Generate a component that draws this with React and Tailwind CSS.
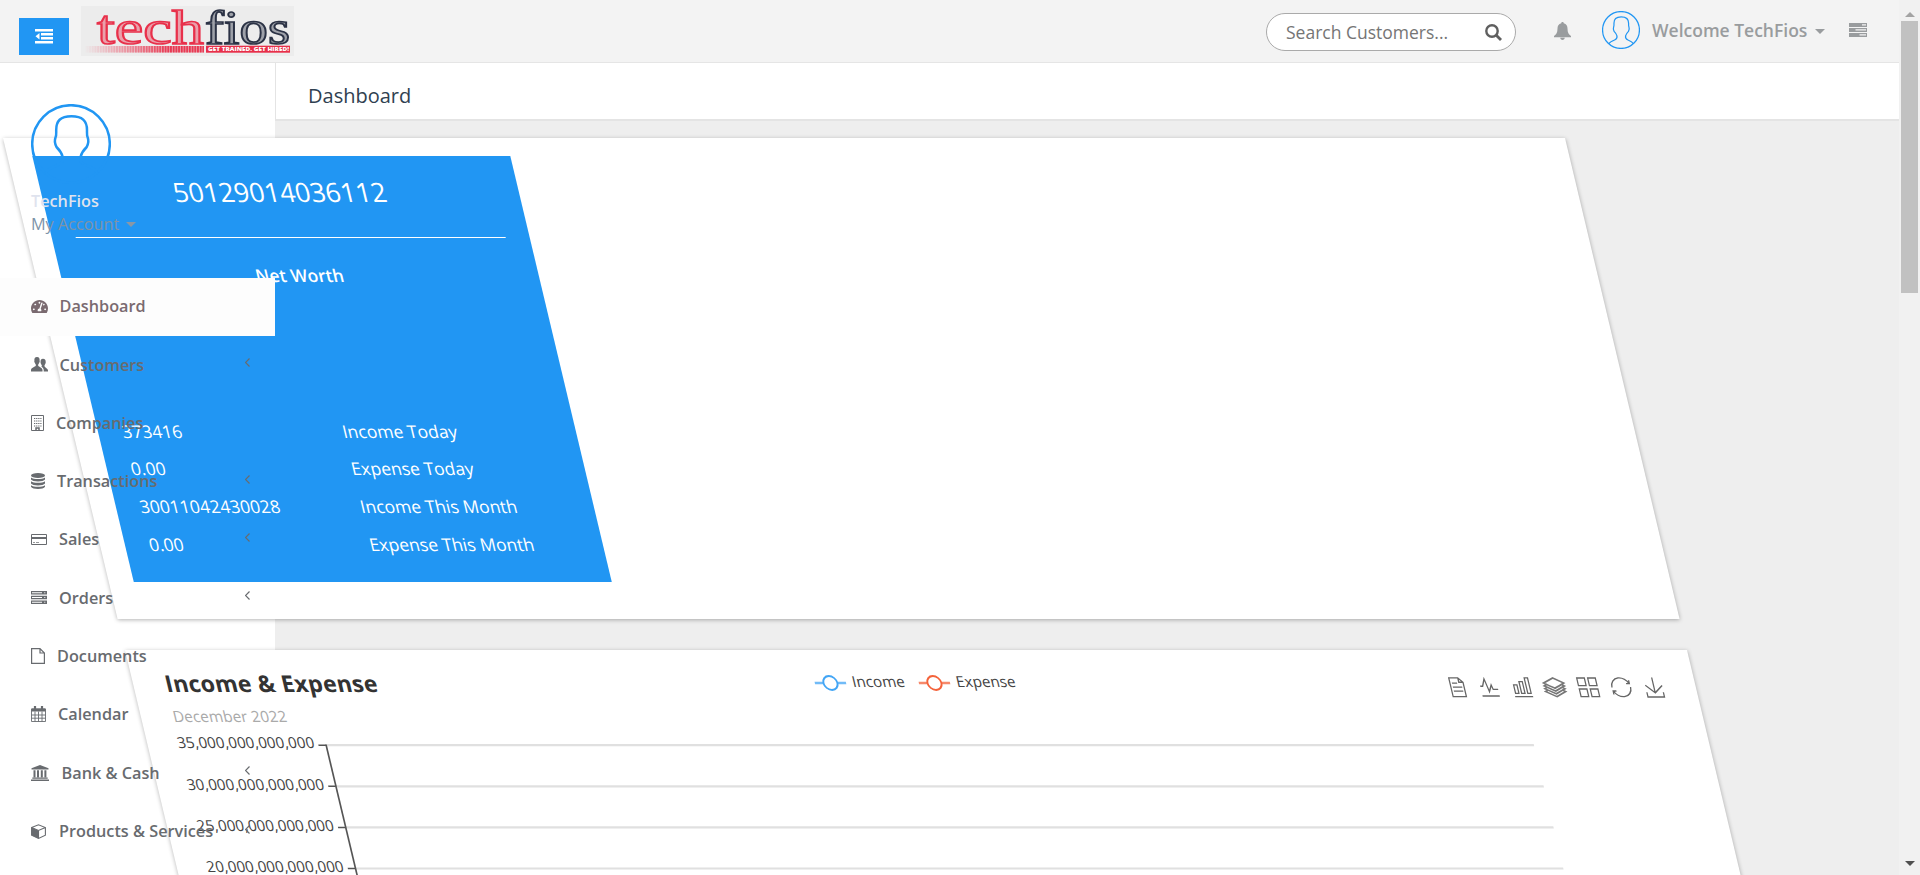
import { FaTachometerAlt } from "react-icons/fa";

const stroke = { fill: "none", stroke: "currentColor" };

function Avatar({ className, w }) {
  return (
    <svg viewBox="0 0 80 80" className={className} {...stroke} strokeWidth={w}>
      <circle cx="40" cy="40" r="38.800" />
      <path d="M14.500 69c2-4 7-6 12-8 5-2 6-4 5-8.500-1-4-3.500-7-6-9.500-1.500-3-2-7-1-9.500 1-1.500.7-4 .7-7.500 0-9 4-13.800 15.300-13.800S56 17 56 26c0 3.500-.3 6 .7 7.500 1 2.500.5 6.500-1 9.500-2.500 2.500-5 5.500-6 9.500-1 4.500 0 6.500 5 8.500s9.500 4 11.500 8" />
    </svg>
  );
}

const icons = {
  dash: <FaTachometerAlt className="h-[17px] w-[17px] shrink-0" />,
  users: (
    <svg viewBox="0 0 17 15" className="h-[15px] w-[17px] shrink-0" fill="currentColor">
      <path d="M6 0C3.800 0 3.200 1.500 3.400 4c-.3.500 0 1.400.5 1.700.1.800.5 1.300.9 1.700v1.400C4 10 0 10.600 0 13v1.500h11.500V13c0-2.400-3.500-3-4.300-4.200V7.400c.4-.4.8-.9.9-1.700.5-.3.800-1.200.5-1.700C8.800 1.500 8.200 0 6 0z" />
      <path d="M12 1.800c-2 0-2.600 1.300-2.400 3.500-.2.500 0 1.200.4 1.500.1.600.4 1 .8 1.400v1l-.5.6c1.200.6 2.400 1.600 2.400 3.300v1.500H17v-1.200c0-2-2.900-2.700-3.500-4.200v-1c.4-.4.7-.8.8-1.400.4-.3.600-1 .4-1.500.2-2.200-.7-3.500-2.700-3.500z" />
    </svg>
  ),
  building: (
    <svg viewBox="0 0 13 16" className="h-[16px] w-[13px] shrink-0" {...stroke}>
      <path d="M.5.500h12v15H.5z" />
      <path d="M3 3.500h7.500M3 6h7.500M3 8.500h7.500M3 11h7.500" strokeDasharray="1.300 .8" strokeWidth="1.200" />
      <path d="M5 15.500V13h3v2.500" strokeWidth="1.500" />
    </svg>
  ),
  db: (
    <svg viewBox="0 0 14 16" className="h-[16px] w-[14px] shrink-0" fill="currentColor">
      <ellipse cx="7" cy="2.500" rx="7" ry="2.500" />
      <path d="M0 4.400c2.500 2 11.500 2 14 0v2.200c-1.500 2.500-12.500 2.500-14 0zM0 8.300c2.500 2 11.500 2 14 0v2.200c-1.500 2.500-12.500 2.500-14 0zM0 12.200c2.500 2 11.500 2 14 0v1.500c-1.500 2.900-12.500 2.900-14 0z" />
    </svg>
  ),
  card: (
    <svg viewBox="0 0 16 11" className="h-[11px] w-[16px] shrink-0" {...stroke}>
      <path d="M.5.500h15v10H.5z" />
      <path d="M.5 4h15" strokeWidth="2" />
      <path d="M2 8.500h2M5 8.500h3" strokeWidth=".7" />
    </svg>
  ),
  server: (
    <svg viewBox="0 0 16 13" className="h-[13px] w-[16px] shrink-0" fill="currentColor">
      <path fillRule="evenodd" d="M0 0h16v3.600H0zM0 4.700h16v3.600H0zM0 9.400h16V13H0zM1 1.300v1h10v-1zM1 6v1h10V6zM1 10.700v1h10v-1zM13.300 1.300v1h1v-1zM13.300 6v1h1V6zM13.300 10.700v1h1v-1z" />
    </svg>
  ),
  file: (
    <svg viewBox="0 0 14 16" className="h-[16px] w-[14px] shrink-0" {...stroke}>
      <path d="M.6.600h8.400l4.400 4.400v10.400H.6zM9 .6V5h4.400" strokeWidth="1.200" />
    </svg>
  ),
  cal: (
    <svg viewBox="0 0 15 16" className="h-[16px] w-[15px] shrink-0" {...stroke}>
      <path d="M.5 3h14v12.500H.5zM.5 9h14M.5 12.200h14M4 5.500v10M7.500 5.500v10M11 5.500v10" strokeWidth=".9" />
      <path d="M.5 4h14" strokeWidth="3" />
      <path d="M4 0v4M11 0v4" strokeWidth="2.200" />
    </svg>
  ),
  bank: (
    <svg viewBox="0 0 18 16" className="h-[16px] w-[18px] shrink-0" fill="currentColor">
      <path d="M9 0l8.500 3.200v1.200H.5V3.200zM2.500 5.300h2v7h-2zM6 5.300h2v7H6zM9.800 5.300h2v7h-2zM13.400 5.300h2v7h-2zM1.300 12.600h15.400v1.200H1.300zM0 14.500h18V16H0z" />
    </svg>
  ),
  cube: (
    <svg viewBox="0 0 15 15" className="h-[15px] w-[15px] shrink-0">
      <path d="M.6 3.600L7.500.8l6.900 2.800v7.600l-6.900 3.200-6.900-3.200zM.6 3.600l6.900 2.900 6.900-2.900M7.500 6.500v8" {...stroke} strokeWidth="1.100" />
      <path d="M.6 3.600l6.900 2.900v8L.6 11.200z" fill="currentColor" />
    </svg>
  ),
};

const nav = [
  ["dash", "Dashboard", "gap-[11.500px]", false],
  ["users", "Customers", "gap-[11.500px]", true],
  ["building", "Companies", "gap-[12px]", false],
  ["db", "Transactions", "gap-[12px]", true],
  ["card", "Sales", "gap-[12px]", true],
  ["server", "Orders", "gap-[12px]", true],
  ["file", "Documents", "gap-[12px]", false],
  ["cal", "Calendar", "gap-[12px]", false],
  ["bank", "Bank & Cash", "gap-[12.500px]", true],
  ["cube", "Products & Services", "gap-[13px]", true],
];

function Logo() {
  return (
    <svg viewBox="0 0 213 50" className="ml-3 h-[50px] w-[213px] overflow-visible">
      <defs>
        <linearGradient id="fade">
          <stop offset="0" stopColor="#ececec" />
          <stop offset="1" stopColor="#ececec" stopOpacity="0" />
        </linearGradient>
        <pattern id="bars" width="2.700" height="8" patternUnits="userSpaceOnUse">
          <rect width="1.700" height="8" fill="#e8354f" />
        </pattern>
      </defs>
      <rect width="213" height="50" fill="#ececec" />
      <g fontFamily="Liberation Serif, serif" fontSize="48" strokeWidth="1.700" fillOpacity=".4">
        <text x="16" y="38" fill="#e8304a" stroke="#e8304a" textLength="107" lengthAdjust="spacingAndGlyphs">tech</text>
        <text x="124" y="38" fill="#2b3245" stroke="#2b3245" textLength="85" lengthAdjust="spacingAndGlyphs">fios</text>
      </g>
      <rect x="4" y="40" width="119" height="6.500" fill="#e8354f" opacity=".45" />
      <rect x="4" y="40" width="119" height="6.500" fill="url(#bars)" />
      <rect x="3" y="39.500" width="85" height="8" fill="url(#fade)" />
      <rect x="125" y="39.700" width="84" height="7" fill="#e8304a" />
      <text x="127" y="45.300" fontFamily="Open Sans, sans-serif" fontWeight="800" fontSize="5.500" fill="#fff" textLength="81" lengthAdjust="spacingAndGlyphs">GET TRAINED. GET HIRED!</text>
    </svg>
  );
}

const tools = [
  ["M17.5,17.3H33M45.4,29.5h-28M11.500,2v56H51V14.800L38.400,2H11.500zM38.400,2.200v12.700H51M45.400,41.700h-28", 1323.7, 31.2, 30],
  ["M4.100,28.900h7.100l9.300-22l7.400,38l9.700-19.700l3,12.800h14.900M4.100,58h51.400", 1355.300, 30, 32],
  ["M6.700,22.900h10V48h-10V22.900zM24.900,13h10v35h-10V13zM43.200,2h10v46h-10V2zM3.100,58h53.700", 1388.100, 30, 30],
  ["M8.200,38.400l-8.400,4.100l30.600,15.300L60,42.500l-8.100-4.100l-21.500,11L8.200,38.400z M51.900,30l-8.100,4.200l-13.400,6.900l-13.900-6.900L8.200,30l-8.400,4.200l8.400,4.200l22.200,11l21.500-11l8.100-4.200L51.900,30z M51.900,21.700l-8.100,4.200L35.700,30l-5.300,2.800L24.900,30l-8.400-4.100l-8.300-4.200l-8.400,4.200L8.200,30l8.300,4.200l13.900,6.900l13.400-6.900l8.100-4.200l8.100-4.100L51.900,21.700zM30.400,2.200L-0.200,17.500l8.400,4.100l8.300,4.200l8.400,4.200l5.500,2.700l5.300-2.700l8.100-4.200l8.100-4.200l8.100-4.100L30.400,2.200z", 1420.800, 30, 30],
  ["M2.300,2.200h22.800V25H2.300V2.200zM35,2.200h22.800V25H35V2.200zM2.300,35h22.800v22.800H2.300V35zM35,35h22.800v22.800H35V35z", 1454.300, 30, 30],
  ["M47,18.900h9.800V8.700M56.300,20.100C52.100,9,40.500,0.600,26.800,2.100C12.600,3.700,1.600,16.200,2.100,30.600M13,41.100H3.100v10.200M3.700,39.900c4.200,11.100,15.800,19.500,29.500,18c14.200-1.600,25.200-14.100,24.700-28.500", 1487.400, 30, 30],
  ["M4.700,22.900L29.300,45.500L54.700,23.400M4.600,43.600L4.600,58L53.800,58L53.800,43.600M29.200,45.100L29.200,0", 1520.200, 29.5, 29],
];

function Chart() {
  const labels = ["35,000,000,000,000", "30,000,000,000,000", "25,000,000,000,000", "20,000,000,000,000"];
  return (
    <svg className="block h-[400px] w-full" fontFamily="Open Sans, sans-serif" fontSize="15">
      <text x="32" y="42.300" fontSize="23" fontWeight="700" fill="#333" textLength="212">Income &amp; Expense</text>
      <text x="32" y="72.300" fontSize="15.400" fill="#aaa">December 2022</text>
      {[["Income", 682, "#42a5f5"], ["Expense", 786, "#f4623a"]].map(([t, x, c]) => (
        <g key={t}>
          <path d={`M${x} 33h31.250`} stroke={c} strokeWidth="2.500" opacity=".75" />
          <circle cx={x + 15.6} cy="33" r="7" fill="#fff" stroke={c} strokeWidth="1.900" />
          <text x={x + 37.5} y="37" fill="#444" fontSize="15.200">{t}</text>
        </g>
      ))}
      {tools.map(([d, x, cx, cy], i) => (
        <path key={x} d={d} fill="none" stroke={i === 3 ? "#777" : "#666"} strokeWidth={i === 3 ? 1.6 : 1.3} vectorEffect="non-scaling-stroke" transform={`translate(${x} 37.300) scale(.335) translate(${-cx} ${-cy})`} />
      ))}
      {labels.map((l, i) => (
        <g key={l}>
          <path d={`M178.500 ${95.2 + i * 41.1}H1386.300`} stroke="#e0e0e0" strokeWidth="2.200" />
          <path d={`M170.800 ${95.2 + i * 41.1}h7.500`} stroke="#555" strokeWidth="1.500" />
          <text x="166.900" y={98.5 + i * 41.1} textAnchor="end" fill="#444" fontSize="15.150">{l}</text>
        </g>
      ))}
      <path d="M178.500 94.500V400" stroke="#555" strokeWidth="1.700" />
    </svg>
  );
}

const rows = [
  ["373416", "Income Today"],
  ["0.00", "Expense Today"],
  ["30011042430028", "Income This Month"],
  ["0.00", "Expense This Month"],
];

export default function App() {
  return (
    <div className="flex h-[875px] w-[1920px] overflow-hidden bg-[#eee] font-['Open_Sans',sans-serif]">
      <div className="flex w-[1899px] shrink-0 flex-col overflow-hidden">
        <header className="relative z-20 flex h-[63px] shrink-0 items-start border-b border-[#e5e5e5] bg-[#f3f3f3] pl-[19px] text-[#999c9e]">
          <button className="mt-[18px] flex h-[37px] w-[50px] items-center justify-center bg-[#2196f3] text-white">
            <svg viewBox="0 0 18 15" className="h-[15px] w-[18px]" fill="currentColor">
              <path d="M0 0h18v2.500H0zM6 4h12v2.500H6zM6 8h12v2.500H6zM0 12h18v2.500H0zM4.500 4v6.500L.5 7.200z" />
            </svg>
          </button>
          <div className="mt-[6px]"><Logo /></div>
          <div className="mt-[13px] ml-auto flex h-[38px] w-[250px] shrink-0 items-center justify-between rounded-full border border-[#aaa] bg-white pr-[13px] pl-[19px] text-[17.5px] text-[#757575]">
            <span>Search Customers...</span>
            <svg viewBox="0 0 17 17" className="h-[17px] w-[17px] text-[#5f5f5f]" {...stroke}>
              <circle cx="7" cy="7" r="5.700" strokeWidth="2.400" />
              <path d="M11 11l5 5" strokeWidth="2.800" />
            </svg>
          </div>
          <svg viewBox="0 0 17 18" className="mt-[22px] ml-[38px] h-[18px] w-[17px]" fill="currentColor">
            <path d="M8.500 0c.8 0 1.200.5 1.200 1.300C12.500 2 13.500 4 13.500 6.500c0 4 1.200 6 3.500 7.500v1.200H0V14c2.300-1.500 3.500-3.500 3.500-7.500C3.500 4 4.500 2 7.300 1.300 7.300.5 7.700 0 8.500 0zM6.300 15.800h4.400c0 1.300-.9 2.200-2.200 2.200s-2.200-.9-2.200-2.200z" />
          </svg>
          <Avatar className="mt-[11px] ml-[31px] h-[38px] w-[38px] text-[#2196f3]" w="2.600" />
          <span className="mt-[18px] ml-[12px] w-[156px] text-[17.5px] leading-6 font-semibold whitespace-nowrap">Welcome TechFios</span>
          <span className="mt-[29px] ml-[7px] border-x-[5px] border-t-[5px] border-x-transparent border-t-current" />
          <svg viewBox="0 0 18 14" className="mt-[23px] mr-[32px] ml-[24px] h-[14px] w-[18px]" fill="currentColor">
            <path fillRule="evenodd" d="M0 0h18v4H0zM0 5h18v4H0zM0 10h18v4H0zM13 1.300v1.300h4V1.300zM6.500 6.300v1.300H17V6.300zM10.500 11.300v1.300H17v-1.300z" />
          </svg>
        </header>
        <div className="flex flex-1">
          <aside className="h-[812px] w-[275px] shrink-0 bg-white">
            <div className="relative z-10 pt-[41px]">
              <div className="h-[174px] pl-[31px]">
                <Avatar className="h-[80px] w-[80px] text-[#2196f3]" w="2.500" />
                <div className="mt-[5px] text-[16.25px] leading-6 font-semibold text-[#dfe3ee]">TechFios</div>
                <div className="flex items-center gap-[7px] text-[16.25px] leading-[22px] text-[#7d93a8]">
                  My Account
                  <span className="border-x-[5px] border-t-[5px] border-x-transparent border-t-[#8a97a5]" />
                </div>
              </div>
              {nav.map(([id, label, gap, more]) => (
                <div
                  key={label}
                  className={`flex h-[58.3px] items-center pr-[25px] pb-[1.500px] pl-[31px] text-[16.25px] font-semibold ${gap} ${id === "dash" ? "bg-[#fdfdfd] text-[#7a6a70]" : "text-[#686b6f]"}`}
                >
                  {icons[id]}
                  <span className="whitespace-nowrap">{label}</span>
                  {more && (
                    <svg viewBox="0 0 5 9" className="mb-1 ml-auto h-[9px] w-[5px]" {...stroke} strokeWidth="1.200">
                      <path d="M4.500.500l-4 4 4 4" />
                    </svg>
                  )}
                </div>
              ))}
            </div>
          </aside>
          <main className="min-w-0 flex-1">
            <h1 className="h-[58px] border-b-2 border-l border-[#e4e4e4] bg-white pl-[32px] text-[20px] leading-[65px] text-[#2f4050]">Dashboard</h1>
            <div className="mt-[16.500px] -ml-[272.500px] w-[1561.500px] origin-top-left skew-x-[13.4deg]">
              <section className="h-[481px] bg-white px-[25px] pt-[18px] shadow-[0_1px_4px_rgba(0,0,0,0.3)]">
                <div className="h-[426px] w-[477.500px] bg-[#2196f3] px-6 text-white">
                  <div className="h-[82px] border-b border-white pt-[17.500px] text-center text-[26.6px] leading-9">50129014036112</div>
                  <div className="mt-[23px] text-center text-[17.500px] leading-[28px] font-semibold">Net Worth</div>
                  <div className="mt-[123px]">
                    {rows.map(([v, l]) => (
                      <div key={l} className="flex h-[37.700px] items-center text-[17.500px]">
                        <span className="w-[220.500px]">{v}</span>
                        <span>{l}</span>
                      </div>
                    ))}
                  </div>
                </div>
              </section>
              <section className="mt-[31px] h-[400px] bg-white shadow-[0_1px_4px_rgba(0,0,0,0.3)]">
                <Chart />
              </section>
            </div>
          </main>
        </div>
      </div>
      <div className="flex w-[21px] shrink-0 flex-col items-center justify-between bg-[#f1f1f1] pt-[12px] pb-[9px]">
        <div className="flex flex-col items-center">
          <span className="border-x-[5px] border-b-[5px] border-x-transparent border-b-[#a3a3a3]" />
          <span className="mt-[4px] h-[272px] w-[17px] bg-[#c1c1c1]" />
        </div>
        <span className="border-x-[5px] border-t-[5px] border-x-transparent border-t-[#505050]" />
      </div>
    </div>
  );
}
